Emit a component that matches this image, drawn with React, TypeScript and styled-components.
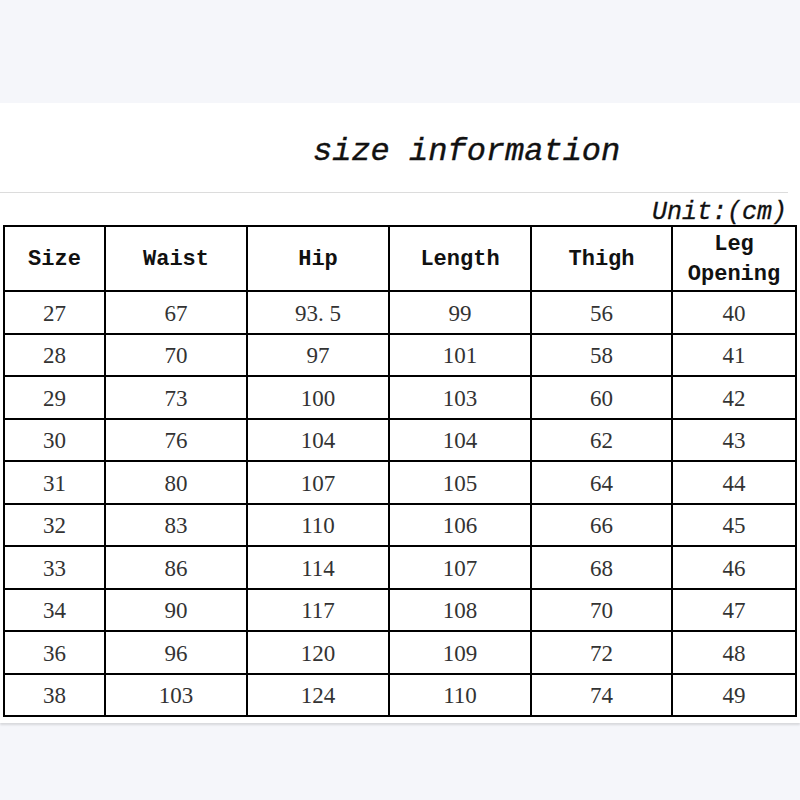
import React from 'react';
import styled, { createGlobalStyle } from 'styled-components';

const GlobalStyle = createGlobalStyle`
	html, body {
		margin: 0;
		padding: 0;
		background: #f5f6fa;
	}
`;

const headers = ['Size', 'Waist', 'Hip', 'Length', 'Thigh', 'Leg Opening'];
const colWidths = [101, 142, 142, 142, 141, 124];

const rows = [
	['27', '67', '93. 5', '99', '56', '40'],
	['28', '70', '97', '101', '58', '41'],
	['29', '73', '100', '103', '60', '42'],
	['30', '76', '104', '104', '62', '43'],
	['31', '80', '107', '105', '64', '44'],
	['32', '83', '110', '106', '66', '45'],
	['33', '86', '114', '107', '68', '46'],
	['34', '90', '117', '108', '70', '47'],
	['36', '96', '120', '109', '72', '48'],
	['38', '103', '124', '110', '74', '49'],
];

const App = () => {
	return (
		<>
			<GlobalStyle />
			<Page>
				<TopBand />
				<Sheet>
					<TitleBar>
						<Title>size information</Title>
					</TitleBar>
					<Rule />
					<UnitLine>Unit:(cm)</UnitLine>
					<SizeTable>
						<colgroup>
							{colWidths.map((w, i) => (
								<col key={i} style={{ width: w }} />
							))}
						</colgroup>
						<thead>
							<tr>
								{headers.map((h) => (
									<HeadCell key={h}>
										{h === 'Leg Opening' ? (
											<>
												Leg
												<br />
												Opening
											</>
										) : (
											h
										)}
									</HeadCell>
								))}
							</tr>
						</thead>
						<tbody>
							{rows.map((r) => (
								<tr key={r[0]}>
									{r.map((v, i) => (
										<DataCell key={i}>{v}</DataCell>
									))}
								</tr>
							))}
						</tbody>
					</SizeTable>
				</Sheet>
			</Page>
		</>
	);
};

const Page = styled.div`
	width: 800px;
	height: 800px;
	background: #f5f6fa;
	overflow: hidden;
`;

const TopBand = styled.div`
	height: 103px;
	background: #f5f6fa;
`;

const Sheet = styled.div`
	background: #ffffff;
	padding-bottom: 6px;
	box-shadow: 0 2px 2px rgba(0, 0, 0, 0.12);
`;

const TitleBar = styled.div`
	height: 89px;
	display: flex;
	align-items: center;
	padding-left: 313px;
	padding-top: 9px;
	box-sizing: border-box;
`;

const Title = styled.h1`
	margin: 0;
	font-family: 'Liberation Mono', monospace;
	font-style: italic;
	font-weight: 400;
	font-size: 32px;
	line-height: 36px;
	color: #111;
	-webkit-text-stroke: 0.4px #111;
	white-space: pre;
`;

const Rule = styled.div`
	width: 788px;
	height: 1px;
	background: #dcdcdc;
`;

const UnitLine = styled.div`
	height: 32px;
	box-sizing: border-box;
	padding-top: 7px;
	padding-right: 13px;
	text-align: right;
	font-family: 'Liberation Mono', monospace;
	font-style: italic;
	font-size: 25px;
	line-height: 25px;
	color: #111;
	-webkit-text-stroke: 0.3px #111;
`;

const SizeTable = styled.table`
	margin-left: 3px;
	width: 793px;
	border-collapse: collapse;
	table-layout: fixed;
	border: 2px solid #000;

	thead tr {
		height: 65px;
	}

	tbody tr {
		height: 42.5px;
	}
`;

const HeadCell = styled.th`
	border: 2px solid #000;
	padding: 2px 0 0;
	text-align: center;
	vertical-align: middle;
	font-family: 'Liberation Mono', monospace;
	font-weight: 700;
	font-size: 22px;
	line-height: 30px;
	color: #111;
`;

const DataCell = styled.td`
	border: 2px solid #000;
	padding: 3px 0 0;
	text-align: center;
	vertical-align: middle;
	font-family: 'Liberation Serif', serif;
	font-size: 23px;
	line-height: 26px;
	color: #333;
	white-space: pre;
`;

export default App;
